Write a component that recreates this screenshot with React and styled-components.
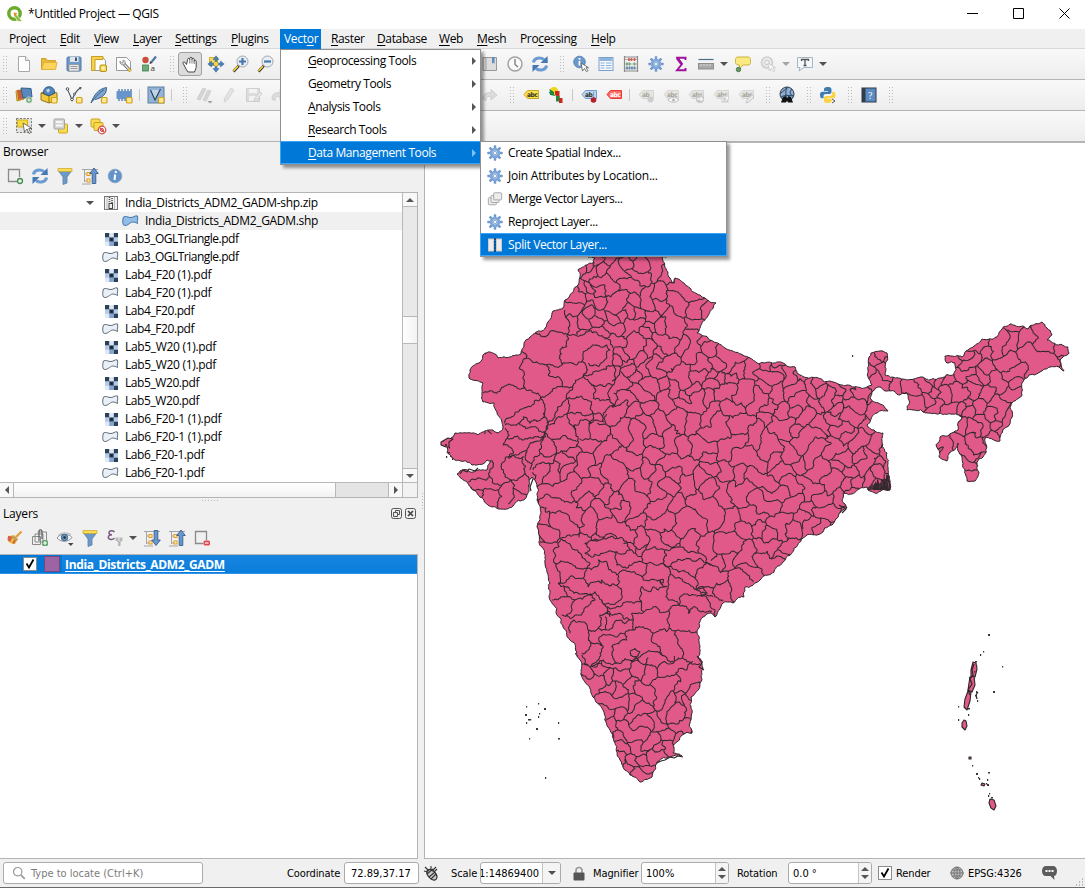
import React from "react";
import styled, { createGlobalStyle, css } from "styled-components";

const Global = createGlobalStyle`
  * { box-sizing: border-box; }
  body { margin: 0; overflow: hidden; background: #f0f0f0; }
`;

/* ---------- frame ---------- */
const Window = styled.div`
  position: relative;
  width: 1085px;
  height: 888px;
  display: flex;
  flex-direction: column;
  background: #f0f0f0;
  color: #000;
  font: 12px/16px "Open Sans", "Noto Sans", sans-serif;
  letter-spacing: -0.2px;
  white-space: nowrap;
  border-bottom: 1px solid #6a6a6a;
`;
const TitleBar = styled.header`
  height: 29px;
  flex: none;
  display: flex;
  align-items: center;
  background: #fff;
  padding: 0 15px 2px 7px;
`;
const TitleText = styled.span`
  margin-left: 5px;
  flex: 1;
  letter-spacing: -0.38px;
`;
const WindowButtons = styled.div`
  display: flex;
  gap: 35px;
`;
const MenuBar = styled.nav`
  height: 20px;
  flex: none;
  display: flex;
  align-items: stretch;
  padding-left: 5px;
  border-bottom: 1px solid #d8d8d8;
`;
const MenuItem = styled.div`
  width: ${(p) => p.$w}px;
  padding: 2px 0 0 4px;
  line-height: 16px;
  letter-spacing: -0.36px;
  ${(p) =>
    p.$open &&
    css`
      background: #0078d7;
      color: #fff;
      height: 20px;
      margin-right: 6px;
      padding-left: 4px;
      letter-spacing: -0.3px;
    `}
`;
const Key = styled.span`
  text-decoration: underline;
  text-underline-offset: 2px;
  text-decoration-thickness: 1px;
`;

/* ---------- toolbars ---------- */
const ToolBar = styled.div`
  height: 31px;
  flex: none;
  display: flex;
  align-items: center;
  background: linear-gradient(#f9f9f9, #ededed);
  border-bottom: 1px solid #b4b4b4;
`;
const Slot = styled.div`
  width: ${(p) => p.$w || 25}px;
  height: 24px;
  flex: none;
  display: flex;
  align-items: center;
  justify-content: center;
  opacity: ${(p) => (p.$off ? 0.4 : 1)};
  ${(p) =>
    p.$pressed &&
    css`
      background: #dcdcdc;
      border: 1px solid #a0a0a0;
      border-radius: 3px;
      width: 24px;
      margin-right: 1px;
    `}
`;
const Grip = styled.i`
  width: 5px;
  height: 17px;
  flex: none;
  margin-left: ${(p) => p.$w - 8}px;
  margin-right: 3px;
  background: conic-gradient(from 270deg at 1px 1px, #bdbdbd 90deg, transparent 0) 0 0 / 3px 3px;
`;
const Divider = styled.i`
  width: 1px;
  height: 12px;
  flex: none;
  margin: 0 ${(p) => p.$r}px 0 ${(p) => p.$l}px;
  background: #c8c8c8;
`;
const Space = styled.i`
  width: ${(p) => p.$w}px;
  flex: none;
`;
const Caret = styled.i`
  width: 0;
  height: 0;
  border: 4px solid transparent;
  border-bottom: 0;
  border-top: 4px solid ${(p) => p.$c || "#505050"};
`;

/* ---------- panels ---------- */
const Work = styled.div`
  flex: 1;
  min-height: 0;
  display: flex;
`;
const Side = styled.aside`
  width: 418px;
  display: flex;
  flex-direction: column;
`;
const Splitter = styled.div`
  width: 6px;
  display: flex;
  align-items: center;
  justify-content: center;
  padding-top: 2px;
  &::after {
    content: "";
    width: 1px;
    height: 17px;
    margin-left: 2px;
    background: repeating-linear-gradient(#b8b8b8 0 1px, transparent 1px 3px);
  }
`;
const Canvas = styled.main`
  flex: 1;
  background: #fff;
  border: 1px solid #b4b4b4;
  border-right: 0;
  overflow: hidden;
`;
const PanelTitle = styled.div`
  height: ${(p) => p.$h}px;
  flex: none;
  display: flex;
  align-items: center;
  padding: 0 2px 0 3px;
  gap: 3px;
  span {
    flex: 1;
  }
`;
const PanelTools = styled.div`
  height: ${(p) => p.$h}px;
  flex: none;
  display: flex;
  align-items: center;
  padding: 0 0 ${(p) => p.$pb}px 2px;
`;
const Tree = styled.div`
  height: 306px;
  flex: none;
  display: grid;
  grid-template-columns: 1fr 15px;
  grid-template-rows: 1fr 15px;
  background: #fff;
  border: 1px solid #b4b4b4;
  border-left: 0;
`;
const TreeRows = styled.div`
  overflow: hidden;
  padding-top: 1px;
`;
const TreeRow = styled.div`
  height: 18px;
  display: flex;
  align-items: center;
  padding-left: ${(p) => p.$indent}px;
  background: ${(p) => (p.$hover ? "#f0f0f0" : "transparent")};
  letter-spacing: ${(p) => p.$ls ?? -0.4}px;
`;
const IconCell = styled.i`
  width: ${(p) => p.$w}px;
  flex: none;
  display: flex;
  align-items: center;
`;
const VScroll = styled.div`
  display: flex;
  flex-direction: column;
  background: #e9e9e9;
  border-left: 1px solid #b8b8b8;
`;
const HScroll = styled.div`
  display: flex;
  background: #e4e4e4;
  border-top: 1px solid #b8b8b8;
`;
const Arrow = styled.div`
  width: 14px;
  height: 14px;
  flex: none;
  display: flex;
  align-items: center;
  justify-content: center;
  background: #f8f8f8;
  border: 0 solid #b8b8b8;
  border-width: ${(p) => p.$b};
`;
const Filler = styled.i`
  flex: 1;
`;
const Thumb = styled.div`
  background: linear-gradient(${(p) => (p.$v ? "90deg" : "180deg")}, #fff, #f2f2f2);
  border: 1px solid #b8b8b8;
  ${(p) =>
    p.$v
      ? css`
          margin-top: ${p.$at}px;
          height: ${p.$len}px;
          border-width: 1px 0;
        `
      : css`
          width: ${p.$len}px;
          border-width: 0 1px 0 0;
        `}
`;
const ScrollCorner = styled.div`
  background: #f2f2f2;
  border: 1px solid #b8b8b8;
  border-width: 1px 0 0 1px;
`;
const HSplit = styled.div`
  height: 4px;
  flex: none;
  width: 18px;
  margin-left: 202px;
  background: linear-gradient(90deg, #b8b8b8 1px, transparent 1px) 0 2px / 3px 1px repeat-x;
`;
const LayerTree = styled.div`
  flex: 1;
  background: #fff;
  border: 1px solid #b4b4b4;
  border-left: 0;
`;
const LayerRow = styled.div`
  height: 19px;
  display: flex;
  align-items: center;
  background: linear-gradient(#1785e0, #0a7edb);
  border-bottom: 1px solid #2e93e8;
  color: #fff;
`;
const LayerLead = styled.div`
  width: 62px;
  height: 18px;
  display: flex;
  align-items: center;
  gap: 7px;
  padding-left: 23px;
  background: #0078d7;
`;
const Swatch = styled.i`
  width: 16px;
  height: 16px;
  background: #9c64a2;
  border: 1px solid #74487a;
`;
const LayerName = styled.b`
  margin-left: 3px;
  padding-top: 1px;
  font-weight: 700;
  letter-spacing: -0.32px;
  text-decoration: underline;
  text-underline-offset: 2px;
`;
const Check = styled.i`
  width: 14px;
  height: 14px;
  flex: none;
  display: flex;
  background: #fff;
  border: 1px solid #8c8c8c;
`;

/* ---------- pop-up menus ---------- */
const Popup = styled.div`
  position: absolute;
  z-index: ${(p) => p.$z || 5};
  left: ${(p) => p.$x}px;
  top: ${(p) => p.$y}px;
  width: ${(p) => p.$w}px;
  height: 116px;
  background: #fff;
  border: 1px solid #8f8f8f;
  box-shadow: 3px 3px 3px rgba(0, 0, 0, 0.4);
  > :first-child {
    margin-top: -1px;
  }
`;
const PopupRow = styled.div`
  height: 23px;
  display: flex;
  align-items: center;
  padding: 0 4px 0 ${(p) => p.$pad}px;
  ${(p) =>
    p.$sel &&
    css`
      background: #0078d7;
      color: #fff;
      outline: 1px solid #3ba3f5;
      outline-offset: -1px;
      margin: 0 -1px;
      padding-left: ${p.$pad + 1}px;
      padding-right: 5px;
    `}
`;
const PopupText = styled.div`
  flex: 1;
  letter-spacing: ${(p) => p.$ls}px;
`;
const RightArrow = styled.i`
  border: 4px solid transparent;
  border-right: 0;
  border-left: 4px solid ${(p) => p.$c};
`;

/* ---------- status bar ---------- */
const StatusBar = styled.footer`
  height: 28px;
  flex: none;
  display: flex;
  align-items: center;
  padding-left: 3px;
  font: 11px/14px "DejaVu Sans Condensed", "DejaVu Sans", sans-serif;
  letter-spacing: -0.1px;
`;
const Field = styled.div`
  width: ${(p) => p.$w}px;
  height: 22px;
  flex: none;
  display: flex;
  align-items: center;
  overflow: hidden;
  background: #fff;
  border: 1px solid #ababab;
  border-radius: 3px;
  padding-left: ${(p) => p.$pad ?? 4}px;
  margin-right: ${(p) => p.$mr || 0}px;
  color: ${(p) => p.$c || "#000"};
  gap: 5px;
  letter-spacing: 0;
`;
const Value = styled.span`
  flex: 1;
  padding-top: 2px;
`;
const ClipText = styled.span`
  flex: 1;
  padding-top: 2px;
  margin: 0 -6px 0 -2px;
`;
const StatusLabel = styled.label`
  width: ${(p) => p.$w}px;
  flex: none;
  padding-top: 2px;
`;
const StatusIcon = styled.span`
  width: ${(p) => p.$w}px;
  flex: none;
  display: flex;
`;
const ComboButton = styled.div`
  width: 18px;
  height: 20px;
  display: flex;
  align-items: center;
  justify-content: center;
  background: #f4f4f4;
  border-left: 1px solid #c4c4c4;
`;
const Spinner = styled.div`
  width: 13px;
  height: 20px;
  display: flex;
  flex-direction: column;
  align-items: center;
  justify-content: center;
  gap: 4px;
  background: #f4f4f4;
  border-left: 1px solid #c4c4c4;
`;
const Tri = styled.i`
  border: 4px solid transparent;
  ${(p) => (p.$up ? "border-top:0;border-bottom:4px solid #555;" : "border-bottom:0;border-top:4px solid #555;")}
`;
const GripCorner = styled.span`
  align-self: flex-end;
  display: flex;
`;

/* ---------- icons ---------- */
const Svg = ({ children, w = 18, h = w, box }) => (
  <svg width={w} height={h} viewBox={box || `0 0 ${w} ${h}`} fill="none">
    {children}
  </svg>
);
const BL = "#5b8ac0";
const YE = "#fbdc4e";
const Badge = ({ x = 11.5, y = 11.5 }) => (
  <rect x={x} y={y} width="5.500" height="5.500" rx="1" fill="#ffe993" stroke="#d0a11b" strokeWidth="1.200" />
);
const Label = ({ fill, stroke, text = "abc", c = "#332" }) => (
  <g>
    <path d="M2 8.500 5.500 4.500h11v8h-11z" fill={fill} stroke={stroke} />
    <text x="5" y="11" fontSize="6.500" fontWeight="700" fontFamily="DejaVu Sans Condensed, sans-serif" letterSpacing="-.4" fill={c}>
      {text}
    </text>
  </g>
);
const Glass = ({ sign }) => (
  <Svg>
    <path d="M1.500 16.500 7 10.500" stroke="#222" strokeWidth="2.600" />
    <path d="M1.500 16 6 11.200" stroke="#f2cf3b" strokeWidth="1.800" />
    <circle cx="10.500" cy="6.500" r="5.500" fill="#e9eff5" stroke="#a0a5aa" />
    <path d={sign} stroke="#4878ad" strokeWidth="2.200" />
  </Svg>
);
const Funnel = () => (
  <Svg>
    <path d="M2.500 4h13L11 10v6l-4 1.500V10z" fill="#6d98c8" stroke="#5580ad" strokeWidth=".8" />
    <path d="M2 1.500h14v3H2z" fill={YE} stroke="#c8a62c" strokeWidth=".7" />
  </Svg>
);
const Refresh = () => (
  <Svg>
    <path d="M2.500 7.500C3 3 9 1.500 13 4.500" stroke="#6b9bd0" strokeWidth="3" />
    <path d="m16.500 1 .3 7H9.500z" fill="#4577b5" />
    <path d="M15.500 10.500c-.5 4.500-6.500 6-10.500 3" stroke="#6b9bd0" strokeWidth="3" />
    <path d="M1.500 17v-7h7z" fill="#4577b5" />
  </Svg>
);
const Gear = () => (
  <Svg w={16} box="0 0 18 18">
    {[0, 45, 90, 135, 180, 225, 270, 315].map((a) => (
      <rect key={a} x="7.600" y=".4" width="2.800" height="5" rx=".6" fill="#6f9ad0" transform={`rotate(${a} 9 9)`} />
    ))}
    <circle cx="9" cy="9" r="4.300" stroke="#7ea6d8" strokeWidth="3.200" />
    <circle cx="9" cy="9" r="2" fill="#f2f6fb" stroke="#5c87bd" strokeWidth=".8" />
  </Svg>
);
const TreeArrow = ({ up }) => (
  <Svg>
    <path d="M1 2.500h16M3.500 3v12M3.500 7H7M3.500 14H7M1 17h9" stroke="#a4a4a4" />
    <rect x="6" y="5.500" width="3" height="3" fill="#fff2c0" stroke="#e59a1c" />
    <rect x="6" y="12" width="3" height="3" fill="#fff2c0" stroke="#e59a1c" />
    <path d={up ? "M13 1 17.300 6.500h-2.500v10h-3.600v-10H8.700z" : "M13 16.500 17.300 11h-2.500V1.500h-3.600V11H8.700z"} fill="#6797cc" stroke="#365f92" strokeWidth=".9" />
  </Svg>
);

const Ic = {
  qgis: (
    <Svg w={16}>
      <circle cx="7.500" cy="7.500" r="5.700" stroke="#6da92b" strokeWidth="3.400" />
      <path d="m8 7 7.500 8.500H11L7 10z" fill="#8ebf3e" stroke="#fff" strokeWidth=".7" />
      <path d="m6.500 6.500 4 .5L7.500 10.500z" fill="#f08a24" />
    </Svg>
  ),
  page: (
    <Svg>
      <path d="M3.500 1.500h7l4 4v11h-11z" fill="#fff" stroke="#a8a8a8" />
      <path d="M10.500 1.500v4h4" fill="#eee" stroke="#a8a8a8" />
    </Svg>
  ),
  folder: (
    <Svg>
      <path d="M1.500 14.500V3.500H6l1.500 2h8V8" fill="#e7b93a" stroke="#d0a22a" />
      <path d="M1.500 14.500 4 7.500h13l-1.500 7z" fill="#fdd35b" stroke="#dfb23b" />
    </Svg>
  ),
  save: (
    <Svg>
      <rect x="2" y="2" width="14" height="14" rx="1.200" fill="#6d9bce" stroke="#5579a4" />
      <rect x="5" y="2" width="8.500" height="5" fill="#dfe5ea" />
      <rect x="10" y="2.500" width="2" height="3.500" fill="#456" />
      <rect x="4" y="9.500" width="10" height="6.500" fill="#e9e9e9" stroke="#888" strokeWidth=".6" />
      <path d="M5.500 11.500h7M5.500 13.500h7" stroke="#999" />
    </Svg>
  ),
  layout: (
    <Svg>
      <path d="M1.500 1.500h10l4 4v10h-14z" fill="#fff" stroke="#999" />
      <path d="M1.500 1.500H13v3H5v11H1.500z" fill="#f5d04b" stroke="#c79f25" />
      <rect x="10" y="10" width="6.500" height="6.500" rx="1" fill="#f2d342" stroke="#b8921b" />
      <path d="M13.200 11v4.500M11 13.200h4.500M11.700 11.700l3 3M14.700 11.700l-3 3" stroke="#fff8cf" strokeWidth=".8" />
    </Svg>
  ),
  manager: (
    <Svg>
      <path d="M1.500 2.500h10l4 4v9h-14z" fill="#fff" stroke="#999" />
      <path d="m8 8 7.500 8" stroke="#555" strokeWidth="3" />
      <path d="m8 8 7.500 8" stroke="#e2e2e2" strokeWidth="1.600" />
      <path d="M5 6a3 3 0 0 0 5 3 3 3 0 0 0-2-4v2.500L6.500 8z" fill="#ddd" stroke="#777" strokeWidth=".7" />
      <path d="m13 13.500 3 3" stroke="#f0cc40" strokeWidth="2" />
    </Svg>
  ),
  style: (
    <Svg>
      <circle cx="5.500" cy="5" r="3.200" fill="#c9503a" />
      <rect x="2.500" y="10" width="6" height="6" fill="#6fab78" stroke="#438050" strokeWidth=".8" />
      <path d="M11.500 7 16 1.500" stroke="#4a77a8" strokeWidth="2.200" />
      <path d="m9.500 9 .8-3L12.500 8z" fill="#333" />
      <text x="10.500" y="15.500" fontSize="8" fontFamily="Open Sans" fill="#333">a</text>
    </Svg>
  ),
  hand: (
    <Svg>
      <path
        d="M5.500 9.500 3.800 7.200c-1-1-2.300.1-1.600 1.200L5 14l2 3h6.500l1.700-4.500V6.500c0-1.600-2-1.600-2 0V4.500c0-1.700-2.200-1.700-2.200 0v-1c0-1.700-2.200-1.700-2.200 0v1c-.2-1.600-2.200-1.500-2.200 0z"
        fill="#fff" stroke="#333" strokeWidth=".9"
      />
      <path d="M8.800 4.500v4M11 4.500v4M13.200 6.500V9" stroke="#555" strokeWidth=".8" />
    </Svg>
  ),
  pan: (
    <Svg>
      <rect x="2.500" y="2.500" width="8" height="8" fill={YE} stroke="#d4b02e" />
      {[0, 90, 180, 270].map((a) => (
        <path key={a} d="M9 .8 12 4.500h-2V7H8V4.500H6z" fill="#4c80bb" stroke="#35639a" strokeWidth=".5" transform={`rotate(${a} 9 9)`} />
      ))}
      <path d="m9 6.500 2.500 2.500L9 11.500 6.500 9z" fill={YE} stroke="#c9a52a" strokeWidth=".6" />
    </Svg>
  ),
  zin: <Glass sign="M10.500 3v7M7 6.500h7" />,
  zout: <Glass sign="M7 6.500h7" />,
  book: (
    <Svg>
      <path d="M2 2.500h13.500v13H2z" fill="#ddd" stroke="#999" />
      <path d="M5 3v12" stroke="#aaa" />
      <path d="M11 2h2.500v7l-1.300-1.500L11 9z" fill={BL} />
    </Svg>
  ),
  clock: (
    <Svg>
      <circle cx="9" cy="9" r="7" fill="#fafafa" stroke="#a2a2a2" strokeWidth="1.500" />
      <path d="M9 4v5.500l3 2.500" stroke="#777" strokeWidth="1.300" />
    </Svg>
  ),
  refresh: <Refresh />,
  identify: (
    <Svg>
      <circle cx="7.500" cy="7" r="5.800" fill="#6b98ca" stroke="#4877ad" strokeWidth=".8" />
      <path d="M7.500 6v4.500M7.500 3v1.800" stroke="#fff" strokeWidth="1.800" />
      <path d="m9 8 1.500 8 2-2.500 2 3.200 1.500-1-2-3h2.500z" fill="#fff" stroke="#555" strokeWidth=".8" />
    </Svg>
  ),
  table: (
    <Svg>
      <rect x="2" y="2.500" width="14" height="13" fill="#f5f9fd" stroke="#7a9fc8" />
      <path d="M2.500 3h13v3h-13z" fill="#8fb4dd" />
      <path d="M3.500 8h4M9 8h5.500M3.500 10.500h4M9 10.500h5.500M3.500 13h4M9 13h5.500" stroke="#8aaed6" strokeWidth="1.200" />
    </Svg>
  ),
  abacus: (
    <Svg>
      <path d="M2.500 1v16M15.500 1v16M2 16h14M2 2h14" stroke="#8c8c8c" strokeWidth="1.200" />
      <path d="M3 4.500h12M3 9h12M3 13h12" stroke="#aaa" />
      <path d="M7 3v3M9.500 3v3M12.500 3v3" stroke="#d05a50" strokeWidth="1.700" />
      <path d="M5 7.500v3M7.500 7.500v3M12.500 7.500v3" stroke="#6aa56f" strokeWidth="1.700" />
      <path d="M5 11.500v3M7.500 11.500v3M10 11.500v3M12.500 11.500v3" stroke="#5c84a5" strokeWidth="1.700" />
    </Svg>
  ),
  gear: <Gear />,
  sigma: (
    <Svg>
      <path d="M13.500 5V2.800h-8L10 9l-5 6.200h8.500V13" stroke="#a0119c" strokeWidth="1.900" />
      <path d="M5 3l4.500 6" stroke="#a0119c" strokeWidth="2.600" />
    </Svg>
  ),
  ruler: (
    <Svg>
      <path d="M1.500 4.500h15" stroke="#46708e" strokeWidth="1.200" />
      <rect x="1.500" y="8.500" width="15" height="5.500" fill="#a9a9a9" stroke="#8d8d8d" />
      <path d="M4 9v2M7 9v2M10 9v2M13 9v2" stroke="#ddd" />
    </Svg>
  ),
  tip: (
    <Svg>
      <path d="M4 2h10c1.500 0 2.500 1 2.500 2.500v3C16.500 9 15.500 10 14 10H9l-3.500 4V10C3 10 1.500 9 1.500 7.500v-3C1.500 3 2.500 2 4 2z" fill="#fbe981" stroke="#cdb23c" />
      <circle cx="4.500" cy="14.500" r="2.200" fill="#6a9a6c" stroke="#477a4b" />
    </Svg>
  ),
  gearOff: (
    <Svg>
      <circle cx="8" cy="7.500" r="5.500" fill="#ddd" stroke="#999" strokeWidth="1.600" />
      <circle cx="8" cy="7.500" r="2.300" fill="#eee" stroke="#888" />
      <path d="m9 8 1.500 8 2-2.500 2 3.200 1.500-1-2-3h2.500z" fill="#fff" stroke="#888" strokeWidth=".8" />
    </Svg>
  ),
  textNote: (
    <Svg>
      <path d="M1.500 2.500h15v10H8l-5 3.500 1-3.500H1.500z" fill="#f3f7fa" stroke="#a6b5c2" />
      <path d="M5.500 6V4.500h7V6M9 4.500v6M7.500 10.500h3" stroke="#555" strokeWidth="1.300" />
    </Svg>
  ),
  dsm: (
    <Svg>
      <path d="m1 5 7-1 1 9-7 2z" fill="#f2cb3f" stroke="#b48e1c" />
      <path d="m2 4 8-1 1 9-8 2z" fill="#c4603a" />
      <path d="m6 2 10 .5L17 11l-9 1z" fill="#5a88bd" stroke="#35608f" />
      <circle cx="14" cy="14" r="3.200" fill="#5b9a66" stroke="#fff" strokeWidth=".6" />
      <path d="M14 12.200v3.600M12.200 14h3.600" stroke="#fff" />
    </Svg>
  ),
  gpkg: (
    <Svg>
      <path d="m1 7 8-3 8 3v7l-8 3-8-3z" fill="#f1c93c" stroke="#957414" />
      <path d="m1 7 8 3v7" stroke="#957414" />
      <path d="M3.500 7.500C3 3 6 .8 9 .8s6 2 5.500 6.700L9 9.800z" fill="#5384b8" stroke="#2f5680" />
      <path d="m6 4 3-1.500 1 2L8 7z" fill="#b9d5ed" />
      <Badge />
    </Svg>
  ),
  shp: (
    <Svg>
      <path d="M2 3c2 3 3 6 5 11 2-5 3-8 8-12" stroke="#41525f" strokeWidth="1.100" />
      <circle cx="2.500" cy="3" r="1.300" fill="#fff" stroke="#555" />
      <circle cx="7" cy="13.500" r="1.300" fill="#fff" stroke="#555" />
      <circle cx="9.500" cy="8" r="1" fill="#fff" stroke="#555" />
      <path d="m14 1 2.500 0-.5 3z" fill="#555" />
      <Badge />
    </Svg>
  ),
  feather: (
    <Svg>
      <path d="M1 17C4 9 8 3 16.500 1.500 17 8 12 12 5 13.500" fill="#7ea5cf" stroke="#3e6590" />
      <path d="M1 17C5 11 9 7 14 3.500" stroke="#3e6590" />
      <Badge />
    </Svg>
  ),
  memory: (
    <Svg>
      <path d="M4 3v12M7 3v12M10 3v12M13 3v12M16 3v12" stroke="#4574ab" strokeWidth="1.300" />
      <rect x="1.500" y="5" width="15" height="8" rx="1" fill="#6795cb" />
      <Badge />
    </Svg>
  ),
  virtual: (
    <Svg>
      <rect x="1" y="1" width="16" height="16" fill="#93b4d6" stroke="#5f7f9f" />
      <path d="m4 4 4 10 5-10z" fill="#dbe7f2" opacity=".6" />
      <path d="M3.500 4 8 14l5.500-11" stroke="#243c55" strokeWidth="1.100" />
      <Badge />
    </Svg>
  ),
  pencils: (
    <Svg>
      <path d="M2 13 8 2l3 1-6 11zM8 14l5-10 3 1-5 10z" fill="#aaa" stroke="#999" />
      <path d="m12.500 15 5 0-2.500 2.500z" fill="#222" />
    </Svg>
  ),
  pencil: (
    <Svg>
      <path d="m4 16 .8-4L11 2l3 2-6.500 10z" fill="#ccc" stroke="#aaa" />
    </Svg>
  ),
  saveOff: (
    <Svg>
      <path d="M1.500 2.500h13v13h-13z" fill="#bbb" stroke="#999" />
      <path d="M4 3h8v4H4zM4 10h8v5H4z" fill="#f2f2f2" />
      <path d="m9 15 1-3 5-6 2 1.500-5 6z" fill="#ddd" stroke="#999" />
    </Svg>
  ),
  redo: (
    <Svg>
      <path d="M2 13c0-5 3-7 8-6V3.500L16 9l-6 5v-3.500c-3-.5-5 0-5 4z" fill="#bbb" stroke="#999" />
    </Svg>
  ),
  label: <Svg><Label fill="#fbe14b" stroke="#c7aa22" /></Svg>,
  pins: (
    <Svg>
      <path d="M2 6h6v4L3.500 9z" fill="#1b8b3b" />
      <circle cx="7" cy="5" r="4" fill="#f3d321" />
      <path d="M2.500 3 7 6v3H3z" fill="#1b8b3b" />
      <path d="M8 5h4.500v7L8 9z" fill="#c8281f" />
      <path d="M9 10h3.500v5.500H9z" fill="#1b8b3b" />
      <path d="M12 12h3.500v5H12z" fill="#c8281f" />
    </Svg>
  ),
  labelPin: (
    <Svg>
      <Label fill="#b9d5f5" stroke="#6f9bd0" text="ab" />
      <path d="M13.500 6v6" stroke="#999" />
      <circle cx="13.500" cy="14" r="2.800" fill="#b3202c" />
    </Svg>
  ),
  labelRed: <Svg><Label fill="#fb6a64" stroke="#e83a34" c="#fff" /></Svg>,
  labelOff: (
    <Svg>
      <Label fill="#d2cfc0" stroke="#aaa" text="ab" />
      <circle cx="13.500" cy="13.500" r="3" fill="#999" />
    </Svg>
  ),
  labelEye: (
    <Svg>
      <Label fill="#d2cfc0" stroke="#aaa" />
      <path d="M6 14c2.500-3.500 8-3.500 11 0-3 3-8.500 3-11 0z" fill="#fff" stroke="#777" />
      <circle cx="11.500" cy="14" r="1.500" fill="#666" />
    </Svg>
  ),
  labelMove: (
    <Svg>
      <Label fill="#d2cfc0" stroke="#aaa" />
      <circle cx="13" cy="13" r="4" fill="#888" />
      <path d="M10 13h5.500M13.500 11l2 2-2 2" stroke="#fff" strokeWidth="1.300" />
    </Svg>
  ),
  labelRot: (
    <Svg>
      <Label fill="#d2cfc0" stroke="#aaa" />
      <rect x="9.500" y="9.500" width="7" height="7" fill="#999" />
      <path d="M11 15c-1-4 1-4.500 4-3.500M15.500 10.500v3M14.500 12c.5 2 0 3-2 3" stroke="#fff" />
    </Svg>
  ),
  labelEdit: (
    <Svg>
      <Label fill="#d2cfc0" stroke="#aaa" />
      <path d="m9 17 1-3.500L15 9l2 2-5 5z" fill="#ddd" stroke="#777" strokeWidth=".8" />
    </Svg>
  ),
  metasearch: (
    <Svg>
      <circle cx="9" cy="8" r="7" fill="#8faed0" stroke="#2c3b4c" />
      <path d="M2.500 7c3-1 4-4 7-5M9 1c-2 4-1 9 0 13M14 3c-3 3-2 6 1.500 7M3 11c3-2 8-2 12-1" stroke="#2c4560" strokeWidth="1" />
      <path d="m5 11 2.500-1 1 2h1l1-2 2.500 1 2 5.500h-5L9 14l-1 2.500H3z" fill="#111" />
    </Svg>
  ),
  python: (
    <Svg>
      <path d="M8.500 1C5.500 1 5 2 5 3.500V5h4v.7H3.500C1.500 5.700 1 7 1 9s.7 3.300 2 3.300h1.500V10c0-1.300 1-2 2-2h4c1 0 2-.7 2-2V3.500C12.500 1.500 11 1 8.500 1z" fill="#3e7bb0" />
      <path d="M9 17c3 0 3.700-1 3.700-2.500V13H8.500v-.7H14c2 0 2.500-1.300 2.500-3.300S15.800 5.800 14.500 5.800H13V8c0 1.300-1 2-2 2H7c-1 0-2 .7-2 2v2.500C5 16.500 6.500 17 9 17z" fill="#fbd343" />
      <path d="m13 13 3 2-3 2" stroke="#444" strokeWidth=".9" />
    </Svg>
  ),
  help: (
    <Svg>
      <rect x="2" y="2" width="14" height="14" fill="#5b8bc2" stroke="#2b3a4a" />
      <path d="M2 2h3.500v14H2z" fill="#333d48" />
      <text x="8" y="13" fontSize="10" fontFamily="Liberation Serif" fill="#fff">?</text>
    </Svg>
  ),
  select: (
    <Svg>
      <rect x="1.500" y="1.500" width="15" height="14" fill="#e2e2df" stroke="#777" strokeDasharray="2 1.500" />
      <path d="M2.500 3h10v7h-10z" fill="#f7da3b" stroke="#d1b024" />
      <path d="m8 6 1.500 9 2.500-3 2 4.500 1.700-1-2-4H17z" fill="#fff" stroke="#555" strokeWidth=".8" />
    </Svg>
  ),
  selectForm: (
    <Svg>
      <rect x="6.500" y="7" width="9" height="9" rx="1" fill={YE} stroke="#c9a625" />
      <rect x="2" y="2" width="10.500" height="10" rx="1" fill="#d4d4d4" stroke="#a4a4a4" />
      <path d="M4 5h6.500M4 8.500h6.500" stroke="#fff" strokeWidth="1.600" />
    </Svg>
  ),
  deselect: (
    <Svg>
      <g fill={YE} stroke="#c5a321">
        <rect x="2" y="2" width="9" height="8" rx="1" />
        <rect x="5" y="5.500" width="9" height="8" rx="1" />
      </g>
      <circle cx="13" cy="13" r="3.800" fill="#fff" stroke="#d84a48" strokeWidth="1.200" />
      <circle cx="13" cy="13" r="1.500" stroke="#d84a48" />
      <path d="m10.500 10.500 5 5" stroke="#d84a48" strokeWidth="1.200" />
    </Svg>
  ),
  addBox: (
    <Svg>
      <path d="M11 14.500H2.500v-12h11V10" stroke="#8a8a8a" strokeWidth="1.300" />
      <circle cx="14" cy="14" r="2.500" fill="#dff0e0" stroke="#498b54" strokeWidth="1.300" />
    </Svg>
  ),
  funnel: <Funnel />,
  collapse: <TreeArrow up />,
  expand: <TreeArrow />,
  info: (
    <Svg>
      <circle cx="9" cy="9" r="6.800" fill="#6393ca" stroke="#8da9c6" />
      <path d="M9.200 7.500 8.500 13M9.800 4v2" stroke="#fff" strokeWidth="2" />
    </Svg>
  ),
  zip: (
    <Svg w={14} h={14}>
      <rect x=".5" y=".5" width="13" height="13" fill="#f1f1f1" stroke="#777" />
      <path d="M5.500 1v6M8 2v6" stroke="#444" strokeWidth="1.500" strokeDasharray="1 1" />
      <rect x="5" y="7.500" width="3.500" height="5" fill="#eee" stroke="#444" />
      <path d="M3 1v12M10.500 1v12" stroke="#bbb" />
    </Svg>
  ),
  polyBlue: (
    <Svg w={17} h={12}>
      <path d="M1.500 2C4 .8 5 2 8 2.500S13 0 15.500 1c.8 3-.8 5 0 7.500C12 6.500 10 6.500 7.500 8.500 5 10.500 3 11 1.500 10 .3 8 .6 4.500 1.500 2z" fill="#91bde6" stroke="#3f77ad" />
    </Svg>
  ),
  poly: (
    <Svg w={17} h={12}>
      <path d="M1.500 2C4 .8 5 2 8 2.500S13 0 15.500 1c.8 3-.8 5 0 7.500C12 6.500 10 6.500 7.500 8.500 5 10.500 3 11 1.500 10 .3 8 .6 4.500 1.500 2z" fill="#eaf0f6" stroke="#5d6c7b" />
    </Svg>
  ),
  raster: (
    <Svg w={13} h={13} box="0 0 12 12">
      <path d="M0 0h12v12H0z" fill="#b4cae6" />
      <path d="M0 0h4v4H0zM8 0h4v4H8zM4 4h4v4H4zM8 8h4v4H8z" fill="#2c4058" />
      <path d="M4 0h4v4H4zM0 8h4v4H0z" fill="#dfe8f3" />
      <path d="M4 8h4v4H4z" fill="#86a6d0" />
      <path d="M5 5h2v2H5z" fill="#16202c" />
    </Svg>
  ),
  brush: (
    <Svg>
      <path d="m10 8 5.500-5.500" stroke="#e0a048" strokeWidth="2.400" />
      <path d="M2 7c3 0 4-1 6-1l4 4-3 5c-3 0-6-1-7-3z" fill="#e7c33b" />
      <path d="m2 7 5 .5L4 13 1.500 11zM8 15l3-5-3 1-2 3z" fill="#d9604a" />
      <path d="m8 6.500 4 4-2 1.500-4-3.500z" fill="#c59a5a" />
    </Svg>
  ),
  group: (
    <Svg>
      <path d="M1.500 7.500h8v8h-8zM4 5h8v8H4zM6.500 3h9v8" stroke="#8a8a8a" />
      <path d="M8 12V3c0-3 3-3 3 0v7" stroke="#555" strokeWidth="1.100" />
      <rect x="11" y="11" width="6" height="6" rx="1.500" fill="#65a56f" />
      <path d="M14 12v4M12 14h4" stroke="#fff" />
    </Svg>
  ),
  eye: (
    <Svg>
      <path d="M1 9c3.500-5 11-5 15-.5C12 13.500 5 13.500 1 9z" fill="#f5f7f9" stroke="#8a8f94" />
      <path d="M2 6.500c3-3 9-3.500 13-1" stroke="#b0b5ba" />
      <circle cx="8.500" cy="8.500" r="3.200" fill="#6a94bf" stroke="#41648b" />
      <circle cx="8.500" cy="8.500" r="1.200" fill="#223" />
      <path d="M12 14h5.500l-2.700 3z" fill="#444" />
    </Svg>
  ),
  epsilon: (
    <Svg>
      <path d="M8.500 3C6.500 1 3 1.500 3 3.700 3 5.500 4.500 5.700 6 5.700 4 5.700 2.300 6.500 2.300 8.300 2.300 11 6.500 11 8.500 9.300" stroke="#7b5b82" strokeWidth="1.500" />
      <path d="M9.500 8.500h7v3l-2 1.500v4h-2.500v-4l-2.500-1.500z" fill="#b8b8b8" />
      <path d="M13 8.500v3.500" stroke="#eee" />
    </Svg>
  ),
  remove: (
    <Svg>
      <path d="M10 14.500H2.500v-12h11V11" stroke="#8a8a8a" strokeWidth="1.300" />
      <rect x="10.500" y="11.500" width="6.500" height="5" rx="1.500" fill="#e2474e" />
      <path d="M12 14h3.500" stroke="#fff" strokeWidth="1.200" />
    </Svg>
  ),
  merge: (
    <Svg w={16} box="0 0 18 18">
      <g fill="#ececec" stroke="#a0a0a0">
        <rect x="1.500" y="7.500" width="9" height="8" rx="1" />
        <rect x="4.500" y="5" width="9" height="8" rx="1" />
        <rect x="7.500" y="2" width="9" height="8" rx="1" />
      </g>
    </Svg>
  ),
  split: (
    <Svg w={16}>
      <rect x="1.500" y="2" width="5" height="12" fill="#ececec" stroke="#ccc" />
      <rect x="9.500" y="2" width="5" height="12" fill="#ececec" stroke="#ccc" />
      <path d="M8 1v14" stroke="#223" strokeDasharray="2 1" />
    </Svg>
  ),
  tick: (
    <Svg w={12}>
      <path d="M2.500 5.500 5 9.500l4.500-8" stroke="#000" strokeWidth="1.800" />
    </Svg>
  ),
  floatBtn: (
    <Svg w={11}>
      <rect x=".5" y=".5" width="10" height="10" rx="2" stroke="#555" />
      <path d="M4.500 4V2.500h4v4H7M2.500 4.500h4v4h-4z" stroke="#555" />
    </Svg>
  ),
  closeBtn: (
    <Svg w={11}>
      <rect x=".5" y=".5" width="10" height="10" rx="2" stroke="#555" />
      <path d="m3 3 5 5m0-5L3 8" stroke="#444" strokeWidth="1.700" />
    </Svg>
  ),
  search: (
    <Svg w={14}>
      <circle cx="5.700" cy="5.700" r="4.200" stroke="#999" strokeWidth="1.200" />
      <path d="m8.800 8.800 4 4" stroke="#999" strokeWidth="1.700" />
    </Svg>
  ),
  extents: (
    <Svg w={16}>
      <path d="M5 5c3-2 9 3 9 7 0 3-3 4-6 2S2 7 5 5z" fill="#ccc" stroke="#333" strokeWidth="1.200" />
      <path d="m4 9 6-5M6 12l6-5M8 14l5-5M2 2l4 4M8 1v4M13 2l-4 4M1 6l4 1M14 4l-3 3" stroke="#333" strokeWidth="1.100" />
    </Svg>
  ),
  lock: (
    <Svg w={12} h={15}>
      <path d="M3 7V4.500C3 .5 9 .5 9 4.500V7" stroke="#999" strokeWidth="1.700" />
      <rect x=".5" y="6.500" width="11" height="8" rx="1" fill="#555" />
    </Svg>
  ),
  globe: (
    <Svg w={14}>
      <circle cx="7" cy="7" r="6" fill="#bdbdbd" stroke="#777" />
      <path d="M0 7h14M7 1v12M2 4h10M2 10h10M7 1C3 4 3 10 7 13M7 1c4 3 4 9 0 12" stroke="#6b6b6b" strokeWidth=".8" />
    </Svg>
  ),
  bubble: (
    <Svg w={17} h={16}>
      <path d="M5 1h7c2.500 0 4 2 4 5s-1.500 5-3 5l.5 4-4-4H5c-2.500 0-4-2-4-5s1.500-5 4-5z" fill="#5c5c5c" />
      <path d="M4.500 6h2M7.500 6h2M10.500 6h2" stroke="#fff" strokeWidth="1.800" />
    </Svg>
  ),
  grip: (
    <Svg w={9}>
      <path d="M7 1h1M4 4h1M7 4h1M1 7h1M4 7h1M7 7h1" stroke="#aaa" strokeWidth="1.500" />
    </Svg>
  ),
};

/* ---------- map ---------- */
const MAINLAND =
  "588 257 595 258 593 263 587 265 578 270 580 277 578 285 565 300 563 308 553 311 548 322 542 331 530 337 521 352 521 354 510 357 498 358 495 354 490 352 483 355 479 363 470 370 469 378 483 383 482 395 483 402 494 403 497 412 502 422 503 427 498 433 493 430 478 435 466 433 455 433 453 437 447 443 447 452 455 460 472 465 487 460 491 461 487 470 473 472 460 471 457 474 473 490 488 505 500 509 513 506 525 499 529 490 529 480 532 477 535 480 537 500 541 513 537 527 542 547 545 563 550 583 552 603 563 627 573 642 580 660 585 682 593 697 603 710 608 727 615 743 620 760 630 775 640 782 652 777 657 762 670 757 682 756 673 753 673 745 682 735 692 733 692 713 691 697 700 683 703 668 698 657 699 643 697 632 703 617 710 613 715 617 723 603 733 603 744 597 745 587 760 580 783 562 807 535 832 525 847 508 842 500 843 493 867 487 868 490 890 490 888 470 887 453 882 443 883 433 874 430 867 425 877 413 888 411 880 404 870 398 872 392 880 387 887 391 900 395 907 393 907 410 930 413 953 414 962 417 958 430 948 436 940 437 936 445 939 457 947 461 949 453 958 443 962 457 965 470 967 481 975 481 979 473 977 462 983 457 985 438 1000 441 1012 417 1010 407 1022 395 1022 383 1040 372 1050 367 1059 367 1064 371 1060 361 1069 353 1068 347 1053 343 1047 340 1052 335 1047 328 1042 322 1035 324 1028 329 1010 324 997 337 982 339 968 350 962 357 945 356 947 363 955 363 954 375 940 378 920 377 907 380 885 375 885 367 887 353 880 351 871 353 868 370 872 385 867 387 847 385 823 381 810 378 797 373 795 367 783 363 757 363 750 358 725 348 708 338 697 333 702 322 716 303 700 295 690 288 675 278 672 283 668 273 662 257 676 250 600 250";

// Surveyed borders. Each sheet has its own origin and is drawn at three units to the pixel;
// `area` is the ground that the sheet covers.
const SHEETS = [
  {
    origin: [430, 250],
    area:
      "390 160 405 180 410 205 420 225 412 252 500 247 530 265 545 285 550 345 553 402 540 450 555 465 520 490 520 515 480 520 455 510 430 530 445 565 440 590 410 605 380 610 370 640 345 640 310 660 295 700 300 800 100 800 0 620 200 540 60 380",
    lines: [
      "405 180 410 205 420 225 412 252", "315 250 340 260 365 242 412 252 460 254 500 247 530 265 545 285 550 345",
      "412 252 410 290 390 300 388 325 398 345", "275 305 290 325 275 340 268 355 282 365 285 415",
      "290 325 320 335 350 345 375 350 398 340 425 340 455 335", "160 430 200 430 215 412 245 405 285 415 325 430 332 445",
      "350 345 355 375 385 380 398 410 345 440 332 445", "398 410 430 405 450 385 460 378 470 350 455 335 460 305 475 295 500 285 530 285 540 300 530 325 505 350 475 340",
      "460 378 490 365 550 345", "332 445 300 470 265 485 245 500 225 520", "332 445 345 465 340 490 350 505 345 545",
      "265 520 280 500 300 520 345 490", "225 525 250 525 265 520 310 530 345 545", "430 405 410 445 375 490 350 520",
      "225 535 235 545 232 565 280 570 310 565 340 560 345 545", "232 565 220 585 245 595 250 610 235 620 290 600 300 580 340 560",
      "550 345 553 402 540 450", "460 378 480 400 490 405 553 402", "480 400 490 445 540 450 555 465 520 490 520 515 480 520 455 510",
      "410 445 440 440 485 455 490 490 430 490 412 490 415 460 410 445", "345 545 355 525 385 500 412 490 430 530 445 565 440 590 410 605 380 610",
      "490 490 520 500", "490 490 480 520", "345 545 365 570 380 600 360 620 330 610 335 590 345 545", "365 570 440 575", "455 510 430 530",
      "185 630 190 650 180 680 165 690 115 695", "180 680 190 700 215 705 245 690 285 670 280 620 250 615 215 640 220 660 225 680 245 690",
      "120 710 150 720 165 715 205 720 215 705", "205 720 215 740 205 775", "245 690 250 720 250 745 235 762", "160 720 150 745",
      "285 670 297 690", "285 620 305 640 300 660", "310 660 345 640 370 640 380 610", "250 715 268 725 290 735", "290 600 285 620", "330 610 305 640",
    ],
  },
  {
    origin: [520, 500],
    area:
      "50 125 95 130 120 115 200 103 240 120 290 115 335 150 365 170 375 150 405 140 435 150 480 140 520 155 550 165 600 215 625 215 650 205 700 245 700 300 600 330 590 370 540 400 560 490 490 475 425 465 345 475 290 490 250 480 210 500 170 465 80 300",
    lines: [
      "60 125 95 130 120 115 145 105 200 103 240 120 290 115 335 150 365 170 375 150 405 140 435 150 480 140 520 155 550 165 575 195 600 215 625 215 650 205 700 245",
      "125 118 100 150 105 190 160 195 200 205", "125 118 145 130 180 160 210 190 200 205", "240 120 195 130 210 150 195 160 215 172",
      "215 172 240 165 290 155 335 150", "290 155 285 175 290 195 320 205 340 190 365 185 365 170", "435 150 430 190 375 190 365 185",
      "105 190 120 215 115 250 190 235 195 215 200 205", "200 205 230 200 235 180 260 185 265 205 290 225 365 230 375 190",
      "190 235 205 260 245 250 245 240 290 255 295 305 245 300 225 275 205 285", "290 255 295 225",
      "365 230 370 240 405 240 420 240 440 260 415 270 400 260 390 275 375 270 365 260 365 305", "430 190 445 200 455 190 500 175 540 175 560 190 575 195",
      "445 200 450 225 445 265 440 275 445 300 475 315 480 290 530 285", "450 220 480 235 500 250 530 270", "430 190 455 200 495 215 525 235 530 215 560 190",
      "525 235 530 270 580 265 590 250 625 240", "530 270 545 285 580 290", "530 290 565 300 585 330 585 350", "475 315 500 320 505 340 520 320 540 335 575 335",
      "580 265 585 290 610 300", "625 215 625 240 635 270 642 310", "365 305 320 305 290 320 260 320 245 300", "365 305 370 335",
      "115 250 150 270 205 285", "130 260 140 290 165 300 205 285", "97 300 125 290 140 290", "165 300 155 325 135 350", "205 285 225 300 200 320 185 345 150 355 125 345",
      "335 340 370 338 440 335 475 315", "335 340 340 390 380 385 400 400 440 395 447 385 445 330", "447 385 490 392 530 397", "465 390 475 420 485 445 490 475",
      "400 400 395 425 420 440 425 465", "340 390 315 400 320 420 275 440 275 465 290 490", "315 400 285 410 260 405 240 410 250 440 220 430 205 420 205 390 160 360",
      "260 320 262 340 240 345 235 385 260 390 255 350", "235 385 205 390", "262 390 340 360", "262 340 300 340 335 360", "205 420 210 440 185 460",
      "250 440 240 460 210 500", "160 360 150 400", "185 465 210 500 250 480 290 490 345 475 365 465 425 465 490 475 540 490",
      "330 455 345 445 360 455 350 470 332 465 330 455", "420 240 430 238 430 248 421 247 420 240", "535 268 550 262 562 280 545 278", "250 345 268 335 270 350",
    ],
  },
];

// x, y, typical spacing between neighbouring districts
const DENSITY = [
  [480, 375, 38], [540, 350, 27], [540, 400, 27], [480, 447, 60], [575, 370, 22], [555, 320, 24],
  [595, 285, 12], [630, 290, 14], [600, 320, 13], [650, 270, 20], [690, 305, 19], [625, 330, 12],
  [640, 360, 14], [680, 370, 14], [590, 420, 20], [500, 490, 17], [520, 450, 15], [560, 460, 17],
  [640, 410, 18], [700, 430, 18], [720, 380, 15], [780, 400, 13], [840, 410, 13], [740, 440, 21],
  [800, 450, 18], [860, 450, 18], [650, 460, 20], [600, 500, 21], [700, 490, 21], [760, 490, 18],
  [820, 500, 15], [560, 550, 23], [630, 540, 21], [700, 540, 23], [770, 530, 17], [600, 600, 19],
  [660, 600, 26], [720, 590, 18], [570, 620, 13], [620, 650, 18], [680, 640, 22], [600, 680, 17],
  [660, 680, 19], [640, 720, 14], [675, 725, 12], [630, 760, 13], [900, 385, 15], [960, 395, 14],
  [1000, 370, 16], [1040, 345, 24], [970, 440, 14], [1000, 420, 13], [880, 475, 13], [875, 370, 13],
];

function makeRandom(seed) {
  let s = seed >>> 0;
  return () => {
    s = (s * 1664525 + 1013904223) >>> 0;
    return s / 4294967296;
  };
}
const toPoints = (str, [ox, oy] = [0, 0], unit = 1) => {
  const n = str.split(" ").map(Number);
  const out = [];
  for (let i = 0; i < n.length; i += 2) out.push([ox + n[i] / unit, oy + n[i + 1] / unit]);
  return out;
};
function inside(poly, x, y) {
  let hit = false;
  for (let i = 0, j = poly.length - 1; i < poly.length; j = i++) {
    const [xi, yi] = poly[i];
    const [xj, yj] = poly[j];
    if (yi > y !== yj > y && x < ((xj - xi) * (y - yi)) / (yj - yi) + xi) hit = !hit;
  }
  return hit;
}
function spacing(x, y) {
  let sum = 0;
  let total = 0;
  for (const [cx, cy, r] of DENSITY) {
    const w = 1 / Math.pow((x - cx) ** 2 + (y - cy) ** 2 + 60, 2);
    sum += w * r;
    total += w;
  }
  return sum / total;
}
function rough(a, b, amount, rnd, out, min) {
  const dx = b[0] - a[0];
  const dy = b[1] - a[1];
  const len = Math.hypot(dx, dy);
  if (len < min) {
    out.push(b);
    return;
  }
  const k = (rnd() - 0.5) * 2 * amount;
  const t = 0.4 + rnd() * 0.2;
  const m = [a[0] + dx * t - dy * k, a[1] + dy * t + dx * k];
  rough(a, m, amount, rnd, out, min);
  rough(m, b, amount, rnd, out, min);
}
// bends the grid of borders so that no region of it looks regular
const bend = ([x, y]) => [
  x + 2.1 * Math.sin(y / 6.1 + x / 17) + 1.1 * Math.sin(y / 2.9 - x / 5.3),
  y + 2.1 * Math.sin(x / 6.7 - y / 15) + 1.1 * Math.sin(x / 3.1 + y / 4.7),
];
const pathOf = (pts) => "M" + pts.map((p) => p[0].toFixed(1) + " " + p[1].toFixed(1)).join("L");

function buildMap() {
  const rnd = makeRandom(71);
  const base = toPoints(MAINLAND);
  const coast = [base[0]];
  base.forEach((p, i) => rough(p, base[(i + 1) % base.length], 0.16, rnd, coast, 2.6));

  const sites = [];
  for (let n = 0; n < 30000; n++) {
    const x = 440 + rnd() * 635;
    const y = 250 + rnd() * 535;
    if (!inside(base, x, y)) continue;
    const r = spacing(x, y) * (0.48 + rnd() * 0.3);
    if (sites.every((s) => (s[0] - x) ** 2 + (s[1] - y) ** 2 > r * r)) sites.push([x, y]);
  }

  // small neighbouring cells are joined, which gives the bent shapes of real districts
  const group = sites.map(() => -1);
  sites.forEach((s, i) => {
    if (group[i] >= 0) return;
    group[i] = i;
    const size = rnd();
    const want = size < 0.25 ? 0 : size < 0.7 ? 1 : 2;
    for (let k = 0; k < want; k++) {
      let best = -1;
      let bestD = (spacing(s[0], s[1]) * 0.95) ** 2;
      sites.forEach((q, j) => {
        const d = (q[0] - s[0]) ** 2 + (q[1] - s[1]) ** 2;
        if (group[j] < 0 && d < bestD) {
          best = j;
          bestD = d;
        }
      });
      if (best < 0) break;
      group[best] = i;
    }
  });

  const areas = SHEETS.map((sheet) => toPoints(sheet.area, sheet.origin, 3));
  const surveyed = ([x, y]) => areas.some((area) => inside(area, x, y));
  let lines = "";
  sites.forEach((s, i) => {
    let cell = [[s[0] - 60, s[1] - 60, -1], [s[0] + 60, s[1] - 60, -1], [s[0] + 60, s[1] + 60, -1], [s[0] - 60, s[1] + 60, -1]];
    sites.forEach((q, j) => {
      if (i === j || Math.abs(q[0] - s[0]) > 90 || Math.abs(q[1] - s[1]) > 90) return;
      const nx = q[0] - s[0];
      const ny = q[1] - s[1];
      const c = (q[0] ** 2 + q[1] ** 2 - s[0] ** 2 - s[1] ** 2) / 2;
      const side = (p) => p[0] * nx + p[1] * ny - c;
      const next = [];
      for (let k = 0; k < cell.length; k++) {
        const a = cell[k];
        const b = cell[(k + 1) % cell.length];
        const da = side(a);
        const db = side(b);
        if (da <= 0) next.push(a);
        if (da <= 0 !== db <= 0) {
          const t = da / (da - db);
          next.push([a[0] + (b[0] - a[0]) * t, a[1] + (b[1] - a[1]) * t, da <= 0 ? j : a[2]]);
        }
      }
      cell = next;
    });
    cell.forEach((a, k) => {
      const b = cell[(k + 1) % cell.length];
      if (a[2] < i || group[a[2]] === group[i]) return;
      const out = [a];
      rough(a, b, 0.22, rnd, out, 2.4);
      let run = [];
      out.map(bend).forEach((p) => {
        if (!surveyed(p)) {
          run.push(p);
          return;
        }
        if (run.length) lines += pathOf([...run, p]);
        run = [];
      });
      if (run.length > 1) lines += pathOf(run);
    });
  });

  SHEETS.forEach((sheet) =>
    sheet.lines.forEach((line) => {
      const pts = toPoints(line, sheet.origin, 3);
      const out = [pts[0]];
      for (let m = 1; m < pts.length; m++) rough(pts[m - 1], pts[m], 0.24, rnd, out, 1.9);
      lines += pathOf(out);
    })
  );

  let delta = "";
  for (let n = 0; n < 60; n++) {
    const x = 869 + rnd() * 21;
    const top = 489 - (x - 866) * 0.85 * rnd();
    delta += pathOf([[x, 490], [x + rnd() * 3 - 1.5, (490 + top) / 2], [x + rnd() * 3 - 1.5, top]]);
  }
  return { coast: pathOf(coast) + "Z", lines, delta };
}
const MAP = buildMap();

const ISLANDS = [
  "M973 662l3 1 1 6-2 8-4 0 0-7z",
  "M970 677l4-1 1 9-3 7-4-2 1-7z",
  "M968 691l3 1-1 9-3 9-3-3 1-8z",
  "M964 720l2 1 1 5-2 4-3-3 0-4z",
  "M990 799l4 1 2 6-2 4-3-2-2-5z",
  "M982 783l3 1-1 2-3-1z",
  "M969 757l2 0 0 2-2 0z",
  "M441 442l7-4 5 1-4 3 0 5-3 0-5-2z",
];
const SPECKS =
  "988 634 983 651 980 654 975 661 976 665 974 671 969 677 970 680 976 691 975 695 977 700 1002 666 993 691 958 706 958 719 968 708 968 714 972 765 976 773 978 777 979 778 988 772 987 779 986 783 987 784 989 793 988 795 991 797 852 355 538 703 544 708 539 713 538 716 528 719 526 722 530 719 536 728 529 738 558 722 558 738 545 777 526 706 525 714 575 653 446 456 448 452 450 455 443 440 445 444 449 447 452 458";
const specks = toPoints(SPECKS);

const IndiaMap = () => (
  <svg width="660" height="716" viewBox="425 143 660 716" fill="none" strokeLinejoin="round">
    <clipPath id="land">
      <path d={MAP.coast} />
    </clipPath>
    <path d={MAP.coast} fill="#e15989" stroke="#2d2529" strokeWidth="1" />
    <g clipPath="url(#land)">
      <path d={MAP.lines} stroke="#322a2e" strokeWidth="1.050" />
    </g>
    <path d={MAP.delta} stroke="#322a2e" strokeWidth="1" />
    {ISLANDS.map((d) => (
      <path key={d} d={d} fill="#e15989" stroke="#2d2529" strokeWidth="1.100" />
    ))}
    <path
      d="M657 763l4-2 4-1 5-3 4 1 4-2 5 1M978 692l-2 3 1 4M974 664l-2 6 1 5-3 4 2 5-4 6 2 5M533 479l-3 8 1 4M697 656l5 7-3 4 5 3M839 505l7 4-4 4M460 474l3-4 4 2 2-3 6 2 3-3"
      stroke="#2d2529" strokeWidth="1.200"
    />
    {specks.map(([x, y], i) => (
      <rect key={i} x={x} y={y} width={i % 3 ? 1.2 : 2} height={i % 2 ? 1.5 : 2} fill="#3b3337" />
    ))}
  </svg>
);

/* ---------- content ---------- */
const MENUS = [
  ["Pro", "j", "ect", 51], ["", "E", "dit", 34], ["", "V", "iew", 39], ["", "L", "ayer", 42],
  ["", "S", "ettings", 56], ["", "P", "lugins", 53], ["Vect", "o", "r", 41, true], ["", "R", "aster", 46],
  ["", "D", "atabase", 62], ["", "W", "eb", 38], ["", "M", "esh", 43], ["Pro", "c", "essing", 71],
  ["", "H", "elp", 40],
];
const FILES = ["Lab3_OGLTriangle", "Lab4_F20 (1)", "Lab4_F20", "Lab5_W20 (1)", "Lab5_W20", "Lab6_F20-1 (1)", "Lab6_F20-1"];
const VECTOR_MENU = [
  ["", "G", "eoprocessing Tools"], ["G", "e", "ometry Tools"], ["", "A", "nalysis Tools"],
  ["", "R", "esearch Tools"], ["", "D", "ata Management Tools"],
];
const DATA_MENU = [
  ["gear", "Create Spatial Index...", -0.37], ["gear", "Join Attributes by Location...", -0.22],
  ["merge", "Merge Vector Layers...", -0.42], ["gear", "Reproject Layer...", -0.37], ["split", "Split Vector Layer...", -0.37],
];

const Tool = ({ i, ...rest }) => <Slot {...rest}>{Ic[i]}</Slot>;
const Tools = ({ list, off }) => list.split(" ").map((i, k) => <Tool key={k} i={i} $off={off} />);
const Drop = ({ c, w = 12 }) => (
  <Slot $w={w}>
    <Caret $c={c} />
  </Slot>
);

export default function App() {
  return (
    <Window>
      <Global />
      <TitleBar>
        {Ic.qgis}
        <TitleText>*Untitled Project — QGIS</TitleText>
        <WindowButtons>
          <Svg w={11}><path d="M0 5.500h11" stroke="#000" /></Svg>
          <Svg w={11}><path d="M.5.5h10v10H.5z" stroke="#000" /></Svg>
          <Svg w={11}><path d="m.5.5 10 10m0-10-10 10" stroke="#000" /></Svg>
        </WindowButtons>
      </TitleBar>
      <MenuBar>
        {MENUS.map(([a, k, b, w, open]) => (
          <MenuItem key={a + k + b} $w={w} $open={open}>
            {a}
            <Key>{k}</Key>
            {b}
          </MenuItem>
        ))}
      </MenuBar>

      <ToolBar>
        <Grip $w={11} />
        <Tools list="page folder save layout manager style" />
        <Grip $w={17} />
        <Tool i="hand" $pressed />
        <Tools list="pan zin zout" />
        <Space $w={199} />
        <Tools list="book clock refresh" />
        <Grip $w={16} />
        <Tools list="identify table abacus gear sigma ruler" />
        <Drop />
        <Tool i="tip" />
        <Tool i="gearOff" $off />
        <Drop c="#a5a5a5" />
        <Tool i="textNote" />
        <Drop />
      </ToolBar>
      <ToolBar>
        <Grip $w={11} />
        <Tools list="dsm gpkg shp feather memory" />
        <Divider $l={3} $r={3} />
        <Tool i="virtual" />
        <Divider $l={3} $r={2} />
        <Grip $w={17} />
        <Tools list="pencils pencil saveOff redo" off />
        <Space $w={186} />
        <Tool i="redo" $off />
        <Grip $w={16} />
        <Tools list="label pins" />
        <Divider $l={4} $r={3} />
        <Tools list="labelPin labelRed" />
        <Divider $l={3} $r={3} />
        <Tools list="labelOff labelEye labelMove labelRot labelEdit" off />
        <Grip $w={16} />
        <Tool i="metasearch" />
        <Grip $w={16} />
        <Tool i="python" />
        <Grip $w={16} />
        <Tool i="help" />
        <Grip $w={16} />
      </ToolBar>
      <ToolBar>
        <Grip $w={11} />
        <Tool i="select" />
        <Drop />
        <Tool i="selectForm" />
        <Drop />
        <Tool i="deselect" />
        <Drop w={11} />
      </ToolBar>

      <Work>
        <Side>
          <PanelTitle $h={20}>
            <span>Browser</span>
          </PanelTitle>
          <PanelTools $h={30} $pb={2}>
            <Tools list="addBox refresh funnel collapse info" />
          </PanelTools>
          <Tree>
            <TreeRows>
              <TreeRow $indent={86} $ls={-0.28}>
                <IconCell $w={18}><Caret /></IconCell>
                <IconCell $w={21}>{Ic.zip}</IconCell>
                India_Districts_ADM2_GADM-shp.zip
              </TreeRow>
              <TreeRow $indent={122} $hover $ls={-0.32}>
                <IconCell $w={23}>{Ic.polyBlue}</IconCell>
                India_Districts_ADM2_GADM.shp
              </TreeRow>
              {FILES.flatMap((f) =>
                ["raster", "poly"].map((t) => (
                  <TreeRow key={f + t} $indent={t === "poly" ? 102 : 105} $ls={f.includes("(") ? -0.32 : f.includes("OGL") ? -0.5 : -0.42}>
                    <IconCell $w={t === "poly" ? 23 : 20}>{Ic[t]}</IconCell>
                    {f}.pdf
                  </TreeRow>
                ))
              )}
            </TreeRows>
            <VScroll>
              <Arrow $b="0 0 1px"><Tri $up /></Arrow>
              <Thumb $v $at={109} $len={28} />
              <Filler />
              <Arrow $b="1px 0 0"><Tri /></Arrow>
            </VScroll>
            <HScroll>
              <Arrow $b="0 1px 0 0"><Svg w={6} h={8}><path d="M5 0v8L1 4z" fill="#555" /></Svg></Arrow>
              <Thumb $len={322} />
              <Filler />
              <Arrow $b="0 0 0 1px"><Svg w={6} h={8}><path d="M1 0v8l4-4z" fill="#555" /></Svg></Arrow>
            </HScroll>
            <ScrollCorner />
          </Tree>
          <HSplit />
          <PanelTitle $h={23}>
            <span>Layers</span>
            {Ic.floatBtn}
            {Ic.closeBtn}
          </PanelTitle>
          <PanelTools $h={29} $pb={3}>
            <Tools list="brush group eye funnel epsilon" />
            <Drop w={12} />
            <Tools list="expand collapse remove" />
          </PanelTools>
          <LayerTree>
            <LayerRow>
              <LayerLead>
                <Check>{Ic.tick}</Check>
                <Swatch />
              </LayerLead>
              <LayerName>India_Districts_ADM2_GADM</LayerName>
            </LayerRow>
          </LayerTree>
        </Side>
        <Splitter />
        <Canvas>
          <IndiaMap />
        </Canvas>
      </Work>

      <StatusBar>
        <Field $w={200} $pad={8} $mr={84} $c="#7c7c7c">
          {Ic.search}
          <Value>Type to locate (Ctrl+K)</Value>
        </Field>
        <StatusLabel $w={57}>Coordinate</StatusLabel>
        <Field $w={75} $pad={6} $mr={4}>
          <Value>72.89,37.17</Value>
        </Field>
        <StatusIcon $w={28}>{Ic.extents}</StatusIcon>
        <StatusLabel $w={29}>Scale</StatusLabel>
        <Field $w={81} $pad={0} $mr={12}>
          <ClipText>1:14869400</ClipText>
          <ComboButton><Caret /></ComboButton>
        </Field>
        <StatusIcon $w={20}>{Ic.lock}</StatusIcon>
        <StatusLabel $w={48}>Magnifier</StatusLabel>
        <Field $w={88} $mr={8}>
          <Value>100%</Value>
          <Spinner><Tri $up /><Tri /></Spinner>
        </Field>
        <StatusLabel $w={51}>Rotation</StatusLabel>
        <Field $w={84} $mr={6}>
          <Value>0.0 °</Value>
          <Spinner><Tri $up /><Tri /></Spinner>
        </Field>
        <StatusIcon $w={18}><Check>{Ic.tick}</Check></StatusIcon>
        <StatusLabel $w={54}>Render</StatusLabel>
        <StatusIcon $w={18}>{Ic.globe}</StatusIcon>
        <StatusLabel $w={73}>EPSG:4326</StatusLabel>
        <StatusIcon $w={34}>{Ic.bubble}</StatusIcon>
        <GripCorner>{Ic.grip}</GripCorner>
      </StatusBar>

      <Popup $x={280} $y={49} $w={201}>
        {VECTOR_MENU.map(([a, k, b], i) => (
          <PopupRow key={b} $pad={27} $sel={i === 4}>
            <PopupText $ls={-0.4}>
              {a}
              <Key>{k}</Key>
              {b}
            </PopupText>
            <RightArrow $c={i === 4 ? "#7fc0f5" : "#555"} />
          </PopupRow>
        ))}
      </Popup>
      <Popup $x={480} $y={141} $w={247} $z={6}>
        {DATA_MENU.map(([icon, text, ls], i) => (
          <PopupRow key={text} $pad={6} $sel={i === 4}>
            <IconCell $w={21}>{Ic[icon]}</IconCell>
            <PopupText $ls={ls}>{text}</PopupText>
          </PopupRow>
        ))}
      </Popup>
    </Window>
  );
}
